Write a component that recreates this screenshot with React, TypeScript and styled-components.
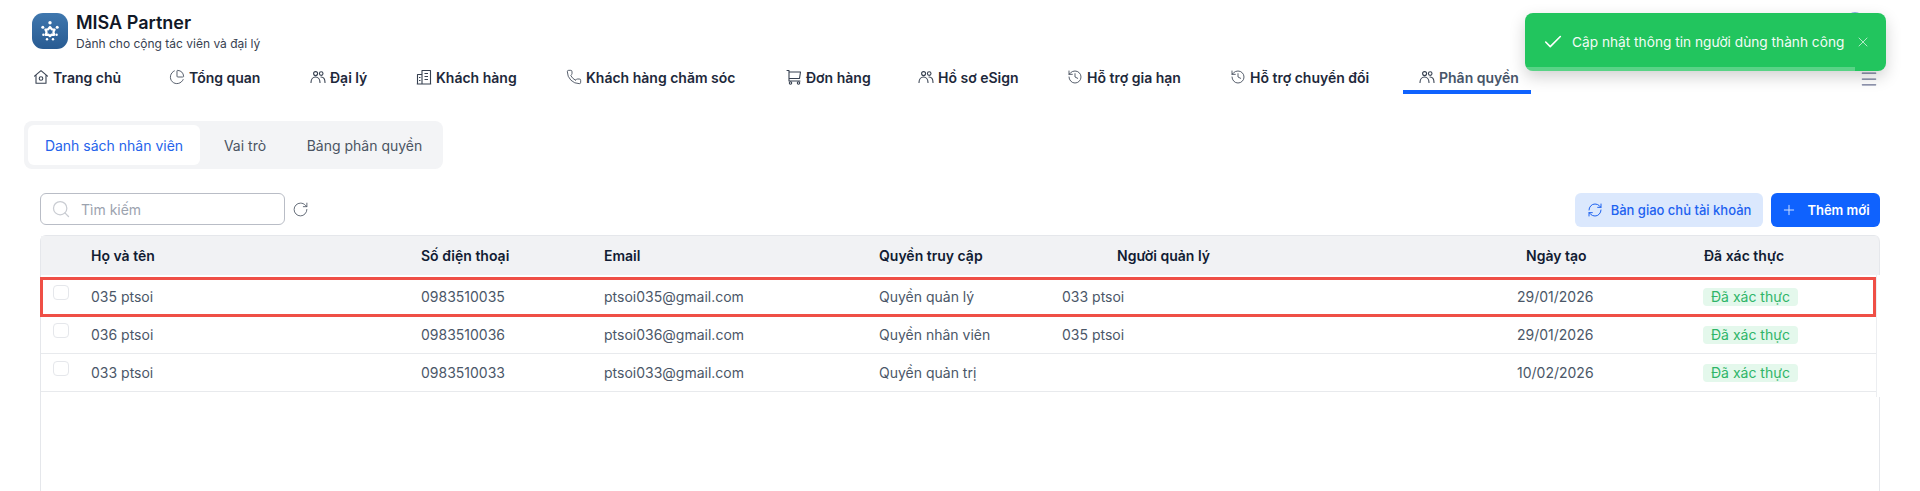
import styled, { createGlobalStyle } from 'styled-components';
import { Check, ChartPie, Menu, Phone, Plus, RefreshCw, RotateCw, Search, X, History } from 'lucide-react';
import type { ReactNode } from 'react';

const GlobalStyle = createGlobalStyle`
  html, body {
    margin: 0;
    padding: 0;
    background: #fff;
    overflow: hidden;
  }
  * {
    box-sizing: border-box;
  }
`;

const Page = styled.div`
  width: 1920px;
  height: 491px;
  overflow: hidden;
  font-family: Inter, 'Noto Sans', sans-serif;
  color: #111827;
`;

const TopBar = styled.div`
  height: 60px;
  padding: 13px 57px 0 32px;
  display: flex;
  justify-content: space-between;
`;

const Brand = styled.div`
  display: flex;
  gap: 8px;
`;

const Logo = styled.div`
  width: 36px;
  height: 36px;
  border-radius: 11px;
  background: linear-gradient(180deg, #3f77ae, #285b92);
  display: flex;
  align-items: center;
  justify-content: center;
`;

const BrandText = styled.div`
  margin-top: -2px;
  display: flex;
  flex-direction: column;
`;

const BrandName = styled.div`
  font-size: 18px;
  line-height: 24px;
  font-weight: 600;
  color: #111827;
`;

const BrandSub = styled.div`
  font-size: 12px;
  line-height: 18px;
  color: #374151;
`;

const Avatar = styled.div`
  width: 16px;
  height: 16px;
  margin-top: -1px;
  border-radius: 50%;
  background: #8fb0e2;
`;

const Nav = styled.nav`
  height: 34px;
  padding: 0 0 0 17px;
  display: flex;
  gap: 17px;
  position: relative;
`;

const NavItem = styled.a<{ $active?: boolean; $width: number }>`
  width: ${(p) => p.$width}px;
  height: 34px;
  padding: 4px 0 0 16px;
  display: flex;
  align-items: center;
  gap: 4px;
  font-size: 14px;
  font-weight: 600;
  color: ${(p) => (p.$active ? '#475569' : '#1e293b')};
  border-bottom: 4px solid ${(p) => (p.$active ? '#0f62fe' : 'transparent')};
  white-space: nowrap;
`;

const NavIcon = styled.span`
  width: 16px;
  height: 16px;
  display: inline-flex;
  color: #374151;
`;

const NavMenu = styled.div`
  position: absolute;
  left: 1859px;
  top: 9px;
  color: #6b7394;
`;

const Tabs = styled.div`
  width: 419px;
  height: 48px;
  margin: 27px 0 0 24px;
  padding: 4px;
  display: flex;
  border-radius: 8px;
  background: #f3f4f6;
`;

const Tab = styled.div<{ $active?: boolean; $width: number }>`
  width: ${(p) => p.$width}px;
  display: flex;
  align-items: center;
  justify-content: center;
  border-radius: 6px;
  font-size: 14px;
  background: ${(p) => (p.$active ? '#fff' : 'transparent')};
  color: ${(p) => (p.$active ? '#2563eb' : '#4b5563')};
`;

const Toolbar = styled.div`
  margin: 24px 40px 0;
  height: 34px;
  display: flex;
  align-items: flex-start;
  justify-content: space-between;
`;

const SearchGroup = styled.div`
  display: flex;
  align-items: center;
  gap: 7px;
  height: 32px;
`;

const SearchBox = styled.div`
  width: 245px;
  height: 32px;
  padding-left: 10px;
  display: flex;
  align-items: center;
  gap: 10px;
  border: 1px solid #b9bdc6;
  border-radius: 6px;
  font-size: 14px;
  color: #9ca3af;
`;

const Actions = styled.div`
  display: flex;
  gap: 8px;
`;

const Button = styled.div<{ $primary?: boolean; $width: number }>`
  width: ${(p) => p.$width}px;
  height: 34px;
  display: flex;
  align-items: center;
  justify-content: center;
  gap: ${(p) => (p.$primary ? '10px' : '8px')};
  border-radius: 6px;
  font-size: 13px;
  font-weight: ${(p) => (p.$primary ? 600 : 500)};
  background: ${(p) => (p.$primary ? '#0f62fe' : '#dbe8fd')};
  color: ${(p) => (p.$primary ? '#fff' : '#1d62f0')};
`;

const Table = styled.div`
  margin: 8px 0 0 40px;
  width: 1840px;
  height: 260px;
  display: flex;
  flex-direction: column;
  border-top: 1px solid #e5e7eb;
  border-left: 1px solid #e5e7eb;
  border-radius: 6px 6px 0 0;
`;

const columns = '50px 330px 183px 275px 183px 455px 186px 1fr';

const HeadRow = styled.div`
  height: 39px;
  flex: none;
  display: grid;
  grid-template-columns: ${columns};
  align-items: center;
  background: #f1f2f4;
  border-right: 1px solid #e5e7eb;
  border-radius: 0 6px 0 0;
`;

const HeadCell = styled.div<{ $indent?: number }>`
  margin-left: ${(p) => p.$indent ?? 0}px;
  font-size: 14px;
  font-weight: 600;
  color: #111c33;
`;

const Rows = styled.div`
  width: 1836px;
  height: 122px;
  flex: none;
  padding-top: 2px;
  border-right: 1px solid #eceef1;
`;

const EmptyBody = styled.div`
  flex: 1;
  border-right: 1px solid #e5e7eb;
`;

const Row = styled.div<{ $marked?: boolean }>`
  height: ${(p) => (p.$marked ? '39px' : '38px')};
  display: grid;
  grid-template-columns: ${columns};
  align-items: center;
  position: relative;
  border-bottom: ${(p) => (p.$marked ? 'none' : '1px solid #e8eaed')};
  ${(p) =>
    p.$marked &&
    `
    &::after {
      content: '';
      position: absolute;
      inset: 0 0 -1px -1px;
      border: 3px solid #ef4f46;
      pointer-events: none;
    }
  `}
`;

const Cell = styled.div`
  font-size: 14px;
  color: #4b5768;
`;

const CheckBox = styled.span`
  display: block;
  width: 16px;
  height: 15px;
  margin: -9px 0 0 12px;
  border: 1px solid #e5e7eb;
  border-radius: 4px;
  background: #fff;
`;

const Badge = styled.span`
  display: inline-block;
  height: 18px;
  padding: 0 8px;
  border-radius: 4px;
  font-size: 14px;
  line-height: 18px;
  background: #e4f8ec;
  color: #2fb568;
`;

const Toast = styled.div`
  position: absolute;
  left: 1525px;
  top: 13px;
  width: 361px;
  height: 58px;
  padding: 0 15px 0 17px;
  display: flex;
  align-items: center;
  overflow: hidden;
  border-radius: 8px;
  background: #22c55e;
  color: #fff;
  font-size: 13.7px;
  box-shadow: 0 6px 16px rgba(0, 0, 0, 0.18);
`;

const ToastText = styled.span`
  margin-left: 8px;
  flex: 1;
  opacity: 0.95;
  white-space: nowrap;
`;

const ToastProgress = styled.div`
  position: absolute;
  left: 0;
  bottom: 0;
  width: 330px;
  height: 4px;
  background: rgba(255, 255, 255, 0.25);
`;

const HomeIcon = () => (
  <svg width="16" height="16" viewBox="0 0 16 16" fill="none" stroke="currentColor" strokeWidth="1.1" strokeLinejoin="round" strokeLinecap="round">
    <path d="M1.5 7.2 8 1.7l6.5 5.5M3 6.2v8h10v-8" />
    <circle cx="8" cy="9.5" r="1.8" />
  </svg>
);

const UsersIcon = () => (
  <svg width="16" height="16" viewBox="0 0 16 16" fill="none" stroke="currentColor" strokeWidth="1.1" strokeLinecap="round">
    <circle cx="5.6" cy="4.6" r="2" />
    <circle cx="11.2" cy="4.6" r="1.8" />
    <path d="M1 13.500c0-3.200 2-5.500 4.500-5.500s4.500 2.300 4.500 5.500" />
    <path d="M11 8c2.300 0 4 2.300 4 5.500" />
  </svg>
);

const BuildingIcon = () => (
  <svg width="16" height="16" viewBox="0 0 16 16" fill="none" stroke="currentColor" strokeWidth="1.1" strokeLinejoin="round">
    <path d="M6 15V1.500h8.500V15zM6 5.500H1.500V15H6M.8 15h14.400" />
    <path d="M8.500 4.500h3.500M8.500 7.500h3.500M8.500 10.500h3.500M3 8.500h1.500M3 11.500h1.500" />
  </svg>
);

const CartIcon = () => (
  <svg width="16" height="16" viewBox="0 0 16 16" fill="none" stroke="currentColor" strokeWidth="1.1" strokeLinecap="round" strokeLinejoin="round">
    <path d="M1 1.500h2v10.500h11M3 3h11.500l-1 6.500H3" />
    <circle cx="4.500" cy="14" r="1.200" />
    <circle cx="12.500" cy="14" r="1.200" />
  </svg>
);

const LogoMark = () => (
  <svg width="22" height="22" viewBox="0 0 22 22" fill="none">
    <path d="M11 7l1.800 2.300 2.800.2-1.200 2.600.9 2.700-2.700-.2-1.600 1.500-1.600-1.500-2.700.2.900-2.700-1.200-2.600 2.800-.2z" stroke="#fff" strokeWidth="2.200" strokeLinejoin="round" />
    <g fill="#fff">
      <circle cx="11" cy="2.800" r="1.700" />
      <circle cx="3.800" cy="7.200" r="1.500" />
      <circle cx="18.200" cy="7.200" r="1.500" />
      <circle cx="4.400" cy="14.800" r="1.200" />
      <circle cx="17.600" cy="14.800" r="1.200" />
      <circle cx="8" cy="19.200" r="1.200" />
      <circle cx="14" cy="19.200" r="1.200" />
    </g>
  </svg>
);

const thin = { size: 16, strokeWidth: 1.25 };

const navItems: { label: string; icon: ReactNode; width: number; active?: boolean }[] = [
  { label: 'Trang chủ', icon: <HomeIcon />, width: 119 },
  { label: 'Tổng quan', icon: <ChartPie {...thin} />, width: 124 },
  { label: 'Đại lý', icon: <UsersIcon />, width: 89 },
  { label: 'Khách hàng', icon: <BuildingIcon />, width: 133 },
  { label: 'Khách hàng chăm sóc', icon: <Phone {...thin} />, width: 203 },
  { label: 'Đơn hàng', icon: <CartIcon />, width: 115 },
  { label: 'Hồ sơ eSign', icon: <UsersIcon />, width: 132 },
  { label: 'Hỗ trợ gia hạn', icon: <History {...thin} />, width: 146 },
  { label: 'Hỗ trợ chuyển đổi', icon: <History {...thin} />, width: 172 },
  { label: 'Phân quyền', icon: <UsersIcon />, width: 128, active: true },
];

const rows = [
  { name: '035 ptsoi', phone: '0983510035', email: 'ptsoi035@gmail.com', role: 'Quyền quản lý', manager: '033 ptsoi', date: '29/01/2026', marked: true },
  { name: '036 ptsoi', phone: '0983510036', email: 'ptsoi036@gmail.com', role: 'Quyền nhân viên', manager: '035 ptsoi', date: '29/01/2026' },
  { name: '033 ptsoi', phone: '0983510033', email: 'ptsoi033@gmail.com', role: 'Quyền quản trị', manager: '', date: '10/02/2026' },
];

const App = () => {
  return (
    <Page>
      <GlobalStyle />
      <TopBar>
        <Brand>
          <Logo>
            <LogoMark />
          </Logo>
          <BrandText>
            <BrandName>MISA Partner</BrandName>
            <BrandSub>Dành cho cộng tác viên và đại lý</BrandSub>
          </BrandText>
        </Brand>
        <Avatar />
      </TopBar>

      <Nav>
        {navItems.map((item) => (
          <NavItem key={item.label} $active={item.active} $width={item.width}>
            <NavIcon>{item.icon}</NavIcon>
            {item.label}
          </NavItem>
        ))}
        <NavMenu>
          <Menu size={20} strokeWidth={1.5} />
        </NavMenu>
      </Nav>

      <Tabs>
        <Tab $active $width={172}>Danh sách nhân viên</Tab>
        <Tab $width={90}>Vai trò</Tab>
        <Tab $width={149}>Bảng phân quyền</Tab>
      </Tabs>

      <Toolbar>
        <SearchGroup>
          <SearchBox>
            <Search size={20} strokeWidth={1.5} color="#c9ccd2" />
            Tìm kiếm
          </SearchBox>
          <RotateCw size={17} strokeWidth={1.2} color="#4b5563" />
        </SearchGroup>
        <Actions>
          <Button $width={188}>
            <RefreshCw size={16} strokeWidth={1.5} />
            Bàn giao chủ tài khoản
          </Button>
          <Button $primary $width={109}>
            <Plus size={16} strokeWidth={1.5} color="#cfe0ff" />
            Thêm mới
          </Button>
        </Actions>
      </Toolbar>

      <Table>
        <HeadRow>
          <span />
          <HeadCell>Họ và tên</HeadCell>
          <HeadCell>Số điện thoại</HeadCell>
          <HeadCell>Email</HeadCell>
          <HeadCell>Quyền truy cập</HeadCell>
          <HeadCell $indent={55}>Người quản lý</HeadCell>
          <HeadCell $indent={9}>Ngày tạo</HeadCell>
          <HeadCell $indent={1}>Đã xác thực</HeadCell>
        </HeadRow>
        <Rows>
          {rows.map((row) => (
            <Row key={row.name} $marked={row.marked}>
              <CheckBox />
              <Cell>{row.name}</Cell>
              <Cell>{row.phone}</Cell>
              <Cell>{row.email}</Cell>
              <Cell>{row.role}</Cell>
              <Cell>{row.manager}</Cell>
              <Cell>{row.date}</Cell>
              <Cell>
                <Badge>Đã xác thực</Badge>
              </Cell>
            </Row>
          ))}
        </Rows>
        <EmptyBody />
      </Table>

      <Toast>
        <Check size={22} strokeWidth={1.75} />
        <ToastText>Cập nhật thông tin người dùng thành công</ToastText>
        <X size={16} strokeWidth={1.5} opacity={0.65} />
        <ToastProgress />
      </Toast>
    </Page>
  );
};

export default App;
